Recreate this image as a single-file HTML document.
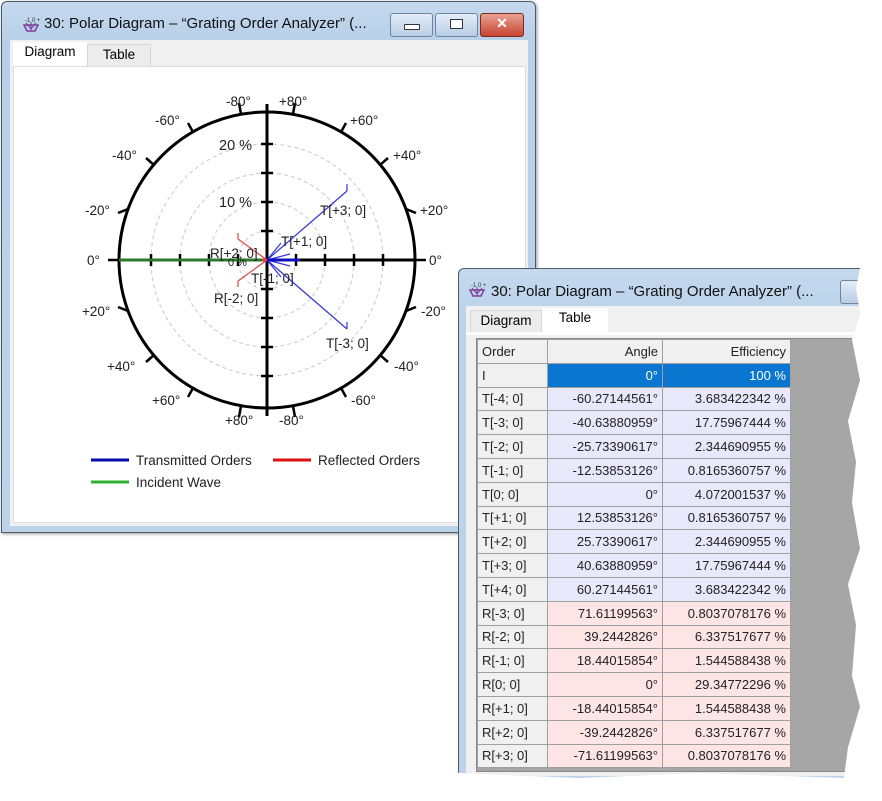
<!DOCTYPE html>
<html><head><meta charset="utf-8"><style>
body{margin:0;width:882px;height:801px;background:#fff;position:relative;overflow:hidden;font-family:"Liberation Sans",sans-serif;}
.abs{position:absolute}
.win{position:absolute;background:linear-gradient(#c5d9ee,#b7cfe8 40px,#bcd3ea);border:1px solid #4a5a6a;border-radius:6px 6px 0 0;box-shadow:1px 1px 3px rgba(0,0,0,.4)}
.title{position:absolute;font-size:15px;color:#111;white-space:nowrap}
.btn{position:absolute;top:11px;height:22px;border:1px solid #6f84a0;border-radius:3px;background:linear-gradient(#e3edf8,#b9cde3)}
.tab{position:absolute;font-size:13.5px;padding:0;line-height:20px;text-align:center}
table{border-collapse:collapse;font-size:13px;font-family:"Liberation Sans",sans-serif}
td{border:1px solid #a0a0a0;height:22.8px;padding:0 4px;white-space:nowrap;color:#222}
td.o{background:#f0f0f0;width:61px}
td.a{width:106px;text-align:right}
td.e{width:119px;text-align:right}
tr.t td.a,tr.t td.e{background:#e8e8fb}
tr.r td.a,tr.r td.e{background:#fde5e5}
tr.i td.a,tr.i td.e{background:#0a76d0;color:#fff}
tr.h td{background:#f0f0f0}
</style></head><body>

<!-- Window 1 -->
<div class="win" style="left:1px;top:1px;width:533px;height:530px;">
  <svg class="abs" style="left:20px;top:13px" width="18" height="18"><text x="3" y="7" font-size="6" fill="#333">-1 0 +1</text><path d="M2 10 L16 10 L13 16 L5 16 Z" fill="none" stroke="#7a3d9c" stroke-width="1.5"/><path d="M9 7 L9 16 M4 8 L9 14 L14 8" stroke="#7a3d9c" fill="none"/></svg>
  <div class="title" style="left:42px;top:13px">30: Polar Diagram – “Grating Order Analyzer” (...</div>
  <div class="btn" style="left:388px;width:41px"><div class="abs" style="left:13px;top:10px;width:14px;height:4px;border:1px solid #334;border-radius:1px;background:#fff"></div></div>
  <div class="btn" style="left:433px;width:41px"><div class="abs" style="left:14px;top:5px;width:11px;height:8px;border:1px solid #334;background:#fff"></div></div>
  <div class="btn" style="left:478px;width:42px;background:linear-gradient(#e8a394,#c7442e);border-color:#7b2a1f"><div class="abs" style="left:0;top:1px;width:42px;text-align:center;color:#fff;font-weight:bold;font-size:14px">✕</div></div>
  <div class="abs" style="left:8px;top:38px;width:518px;height:486px;background:#f0f0f0"></div>
  <div class="tab" style="left:11px;top:40px;width:74px;height:24px;background:#fff;">Diagram</div>
  <div class="tab" style="left:85px;top:42px;width:62px;height:22px;background:#ececec;border:1px solid #d6d6d6;border-bottom:none">Table</div>
  <div class="abs" style="left:11px;top:64px;width:511px;height:455px;background:#fff;border:1px solid #ddd"></div>
</div>
<svg class="abs" style="left:0;top:0" width="540" height="500" font-family="Liberation Sans, sans-serif" font-size="13.5" fill="#222">
  <g fill="none" stroke="#c8c8c8" stroke-dasharray="4,3">
    <circle cx="267" cy="260" r="29"/><circle cx="267" cy="260" r="58"/><circle cx="267" cy="260" r="87"/><circle cx="267" cy="260" r="116"/>
  </g>
  <circle cx="267" cy="260" r="148" fill="none" stroke="#000" stroke-width="3"/>
  <g stroke="#000" stroke-width="3">
    <line x1="119" y1="260" x2="415" y2="260"/><line x1="267" y1="104" x2="267" y2="416"/>
  </g>
  <g stroke="#000" stroke-width="2.5">
    <line x1="238" y1="254" x2="238" y2="266"/><line x1="209" y1="254" x2="209" y2="266"/><line x1="180" y1="254" x2="180" y2="266"/><line x1="151" y1="254" x2="151" y2="266"/>
    <line x1="296" y1="254" x2="296" y2="266"/><line x1="325" y1="254" x2="325" y2="266"/><line x1="354" y1="254" x2="354" y2="266"/><line x1="383" y1="254" x2="383" y2="266"/>
    <line x1="261" y1="231" x2="273" y2="231"/><line x1="261" y1="202" x2="273" y2="202"/><line x1="261" y1="173" x2="273" y2="173"/><line x1="261" y1="144" x2="273" y2="144"/>
    <line x1="261" y1="289" x2="273" y2="289"/><line x1="261" y1="318" x2="273" y2="318"/><line x1="261" y1="347" x2="273" y2="347"/><line x1="261" y1="376" x2="273" y2="376"/>
  </g>
  <g stroke="#000" stroke-width="2.5">
    <path d="M415 260h11M119 260h-11
    M406 209l10 4M128 209l-10 4M406 311l10-4M128 311l-10-4
    M380 165l8-7M154 165l-8-7M380 355l8 7M154 355l-8 7
    M341 132l5-9M193 132l-5-9M341 388l5 9M193 388l-5 9
    M293 114l2-11M241 114l-2-11M293 406l2 11M241 406l-2 11"/>
  </g>
  <g stroke="#3333dd" stroke-width="1.2">
    <line x1="267" y1="260" x2="347" y2="191"/><line x1="267" y1="260" x2="347" y2="329"/>
    <line x1="267" y1="260" x2="281" y2="243"/><line x1="267" y1="260" x2="281" y2="277"/>
    <line x1="267" y1="260" x2="290" y2="254"/><line x1="267" y1="260" x2="290" y2="266"/>
    <line x1="347" y1="191" x2="347" y2="184"/><line x1="347" y1="329" x2="347" y2="322"/>
    <line x1="267" y1="260" x2="300" y2="260" stroke-width="3" stroke="#1010c0"/>
  </g>
  <g stroke="#e04040" stroke-width="1.2">
    <line x1="267" y1="260" x2="238" y2="239"/><line x1="267" y1="260" x2="238" y2="281"/>
    <line x1="238" y1="239" x2="238" y2="233"/><line x1="238" y1="281" x2="238" y2="287"/>
    <line x1="267" y1="260" x2="250" y2="260" stroke-width="3"/>
  </g>
  <line x1="119" y1="260" x2="262" y2="260" stroke="#2a7a2a" stroke-width="3"/>
  <text x="219" y="150" font-size="14.5">20 %</text><text x="219" y="207" font-size="14.5">10 %</text>
  <text x="320" y="215">T[+3; 0]</text><text x="281" y="246">T[+1; 0]</text>
  <text x="210" y="258">R[+2; 0]</text><text x="228" y="266" font-size="11">0 %</text>
  <text x="251" y="283">T[-1; 0]</text><text x="214" y="303">R[-2; 0]</text>
  <text x="326" y="348">T[-3; 0]</text>
  <text x="226" y="106">-80°</text><text x="279" y="106">+80°</text>
  <text x="155" y="125">-60°</text><text x="350" y="125">+60°</text>
  <text x="112" y="160">-40°</text><text x="393" y="160">+40°</text>
  <text x="85" y="215">-20°</text><text x="420" y="215">+20°</text>
  <text x="87" y="265">0°</text><text x="429" y="265">0°</text>
  <text x="82" y="316">+20°</text><text x="421" y="316">-20°</text>
  <text x="107" y="371">+40°</text><text x="394" y="371">-40°</text>
  <text x="152" y="405">+60°</text><text x="351" y="405">-60°</text>
  <text x="225" y="425">+80°</text><text x="279" y="425">-80°</text>
  <line x1="91" y1="460" x2="129" y2="460" stroke="#0a0aa8" stroke-width="3"/>
  <text x="136" y="465">Transmitted Orders</text>
  <line x1="273" y1="460" x2="311" y2="460" stroke="#dd1010" stroke-width="3"/>
  <text x="318" y="465">Reflected Orders</text>
  <line x1="91" y1="482" x2="129" y2="482" stroke="#30b030" stroke-width="3"/>
  <text x="136" y="487">Incident Wave</text>
</svg>

<!-- Window 2 -->
<div class="abs" style="left:458px;top:268px;width:402px;height:510px;clip-path:polygon(0 0,100% 0,99% 4%,100% 9%,98% 14%,100% 22%,97% 30%,99% 38%,98% 46%,100% 55%,97% 62%,99% 70%,98% 80%,100% 86%,97% 94%,96% 100%,60% 99%,30% 100%,0 99%);">
  <div class="abs" style="left:0;top:0;width:402px;height:510px;background:linear-gradient(#c5d9ee,#bcd3ea 40px);border:1px solid #4a5a6a;border-radius:6px 0 0 0"></div>
  <svg class="abs" style="left:10px;top:12px" width="18" height="18"><text x="3" y="7" font-size="6" fill="#333">-1 0 +1</text><path d="M2 10 L16 10 L13 16 L5 16 Z" fill="none" stroke="#7a3d9c" stroke-width="1.5"/><path d="M9 7 L9 16 M4 8 L9 14 L14 8" stroke="#7a3d9c" fill="none"/></svg>
  <div class="title" style="left:33px;top:15px">30: Polar Diagram – “Grating Order Analyzer” (...</div>
  <div class="btn" style="left:382px;top:12px;width:40px"></div>
  <div class="abs" style="left:8px;top:38px;width:400px;height:470px;background:#f0f0f0"></div>
  <div class="tab" style="left:12px;top:42px;width:70px;height:22px;background:#ececec;border:1px solid #d6d6d6;border-bottom:none">Diagram</div>
  <div class="tab" style="left:84px;top:40px;width:66px;height:25px;background:#fff">Table</div>
  <div class="abs" style="left:8px;top:64px;width:400px;height:3px;background:#fff"></div>
  <div class="abs" style="left:18px;top:70px;width:384px;height:432px;background:#a6a6a6;border:1px solid #888"></div>
  <table class="abs" style="left:19px;top:71px;background:#fff">
    <tr class="h"><td class="o">Order</td><td class="a">Angle</td><td class="e">Efficiency</td></tr>
    <tr class="i"><td class="o">I</td><td class="a">0°</td><td class="e">100 %</td></tr>
    <tr class="t"><td class="o">T[-4; 0]</td><td class="a">-60.27144561°</td><td class="e">3.683422342 %</td></tr>
    <tr class="t"><td class="o">T[-3; 0]</td><td class="a">-40.63880959°</td><td class="e">17.75967444 %</td></tr>
    <tr class="t"><td class="o">T[-2; 0]</td><td class="a">-25.73390617°</td><td class="e">2.344690955 %</td></tr>
    <tr class="t"><td class="o">T[-1; 0]</td><td class="a">-12.53853126°</td><td class="e">0.8165360757 %</td></tr>
    <tr class="t"><td class="o">T[0; 0]</td><td class="a">0°</td><td class="e">4.072001537 %</td></tr>
    <tr class="t"><td class="o">T[+1; 0]</td><td class="a">12.53853126°</td><td class="e">0.8165360757 %</td></tr>
    <tr class="t"><td class="o">T[+2; 0]</td><td class="a">25.73390617°</td><td class="e">2.344690955 %</td></tr>
    <tr class="t"><td class="o">T[+3; 0]</td><td class="a">40.63880959°</td><td class="e">17.75967444 %</td></tr>
    <tr class="t"><td class="o">T[+4; 0]</td><td class="a">60.27144561°</td><td class="e">3.683422342 %</td></tr>
    <tr class="r"><td class="o">R[-3; 0]</td><td class="a">71.61199563°</td><td class="e">0.8037078176 %</td></tr>
    <tr class="r"><td class="o">R[-2; 0]</td><td class="a">39.2442826°</td><td class="e">6.337517677 %</td></tr>
    <tr class="r"><td class="o">R[-1; 0]</td><td class="a">18.44015854°</td><td class="e">1.544588438 %</td></tr>
    <tr class="r"><td class="o">R[0; 0]</td><td class="a">0°</td><td class="e">29.34772296 %</td></tr>
    <tr class="r"><td class="o">R[+1; 0]</td><td class="a">-18.44015854°</td><td class="e">1.544588438 %</td></tr>
    <tr class="r"><td class="o">R[+2; 0]</td><td class="a">-39.2442826°</td><td class="e">6.337517677 %</td></tr>
    <tr class="r"><td class="o">R[+3; 0]</td><td class="a">-71.61199563°</td><td class="e">0.8037078176 %</td></tr>
  </table>
</div>
</body></html>
